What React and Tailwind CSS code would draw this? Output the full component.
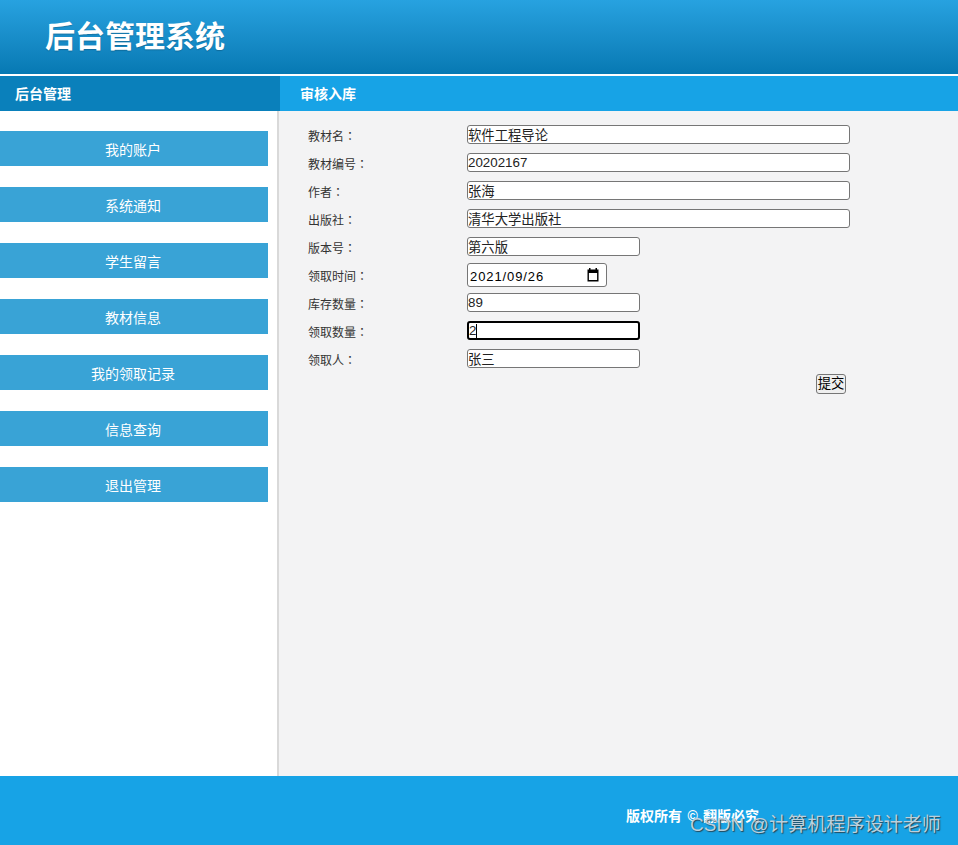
const cjk = "font-['Liberation_Sans','Noto_Sans_CJK_SC',sans-serif]";

const navItems = ["我的账户", "系统通知", "学生留言", "教材信息", "我的领取记录", "信息查询", "退出管理"];

const fields = [
  { label: "教材名", value: "软件工程导论", width: "w-[383px]" },
  { label: "教材编号", value: "20202167", width: "w-[383px]" },
  { label: "作者", value: "张海", width: "w-[383px]" },
  { label: "出版社", value: "清华大学出版社", width: "w-[383px]" },
  { label: "版本号", value: "第六版", width: "w-[173px]" },
  { label: "领取时间", value: "2021/09/26", date: true },
  { label: "库存数量", value: "89", width: "w-[173px]" },
  { label: "领取数量", value: "2", width: "w-[173px]", focused: true },
  { label: "领取人", value: "张三", width: "w-[173px]" },
];

const CalendarIcon = () => (
  <svg viewBox="0 0 16 16" className="absolute right-[5px] top-[3px] h-4 w-4">
    <path d="M4 1h1.5v1.5h5V1H12v1.5h1.5v12h-11v-12H4z M3.9 6v7.1h8.2V6z" fill="#000" fillRule="evenodd" />
  </svg>
);

const Field = ({ label, value, width, date, focused }) => (
  <div className="flex h-[28px] items-center">
    <span className="w-[159px] pt-[4px] text-xs text-[#333]">
      {label}
      {/* the TC face centres the full-width colon, as in the picture */}
      <span className="font-['Noto_Sans_CJK_TC',sans-serif]">：</span>
    </span>
    {date ? (
      <div className="relative mt-[2px] h-[24px] w-[140px] rounded-[3px] border border-[#767676] bg-white">
        <input
          readOnly
          value={value}
          className="h-full w-full pl-[2px] text-[13px] tracking-[0.9px] text-black outline-none"
        />
        <CalendarIcon />
      </div>
    ) : (
      <div className="relative">
        <input
          readOnly
          value={value}
          className={`block h-[19px] rounded-[3px] text-[13.33px] leading-none text-[#222] outline-none ${width} ${
            focused ? "border-2 border-black bg-white" : "border border-[#767676] bg-white"
          }`}
        />
        {focused && <span className="absolute left-[9px] top-[3px] h-[14px] w-px bg-black" />}
      </div>
    )}
  </div>
);

export default function App() {
  return (
    <div className={`relative flex h-[845px] w-[958px] flex-col overflow-hidden bg-white ${cjk}`}>
      {/* Header */}
      <header className="flex h-[74px] items-center bg-gradient-to-b from-[#27a2e0] to-[#0679b3] pb-[1px] pl-[45px]">
        <h1 className="text-[30px] font-bold text-white [text-shadow:0_1px_1px_rgba(0,0,0,0.2)]">后台管理系统</h1>
      </header>
      <div className="h-[2px] bg-white" />

      {/* Title bars */}
      <div className="flex h-[35px] text-sm font-bold text-white">
        <div className="flex w-[280px] items-center bg-[#0a80bb] pl-[15px]">后台管理</div>
        <div className="flex flex-1 items-center bg-[#17a3e6] pl-[20px]">审核入库</div>
      </div>

      <div className="flex flex-1">
        {/* Sidebar */}
        <aside className="flex w-[279px] flex-col gap-[21px] border-r-2 border-[#d9d9d9] pt-[20px]">
          {navItems.map((item) => (
            <div
              key={item}
              className="flex h-[35px] w-[268px] items-center justify-center bg-[#39a3d6] pr-[2px] pt-[2px] text-sm text-white"
            >
              {item}
            </div>
          ))}
        </aside>

        {/* Form */}
        <main className="flex-1 bg-[#f3f3f4] pl-[29px] pt-[9px]">
          {fields.map((field) => (
            <Field key={field.label} {...field} />
          ))}
          <div className="-mt-px ml-[508px] w-[31px]">
            <button className="h-[20px] w-[30px] rounded-[3px] border border-[#767676] bg-[#efefef] text-[13.33px] leading-none text-black">
              提交
            </button>
          </div>
        </main>
      </div>

      {/* Footer */}
      <footer className="h-[69px] bg-[#17a3e6] pl-[626px] pt-[30px] text-sm font-bold text-white">
        版权所有 <span className="mx-[1.5px]">©</span> 翻版必究
      </footer>

      {/* Watermark */}
      <span className="absolute left-[690px] top-[811px] text-[19px] leading-[28px] tracking-[0.1px] text-[#bcd0dc] [text-shadow:1px_1px_1px_rgba(40,40,40,0.75)]">
        CSDN @计算机程序设计老师
      </span>
    </div>
  );
}
